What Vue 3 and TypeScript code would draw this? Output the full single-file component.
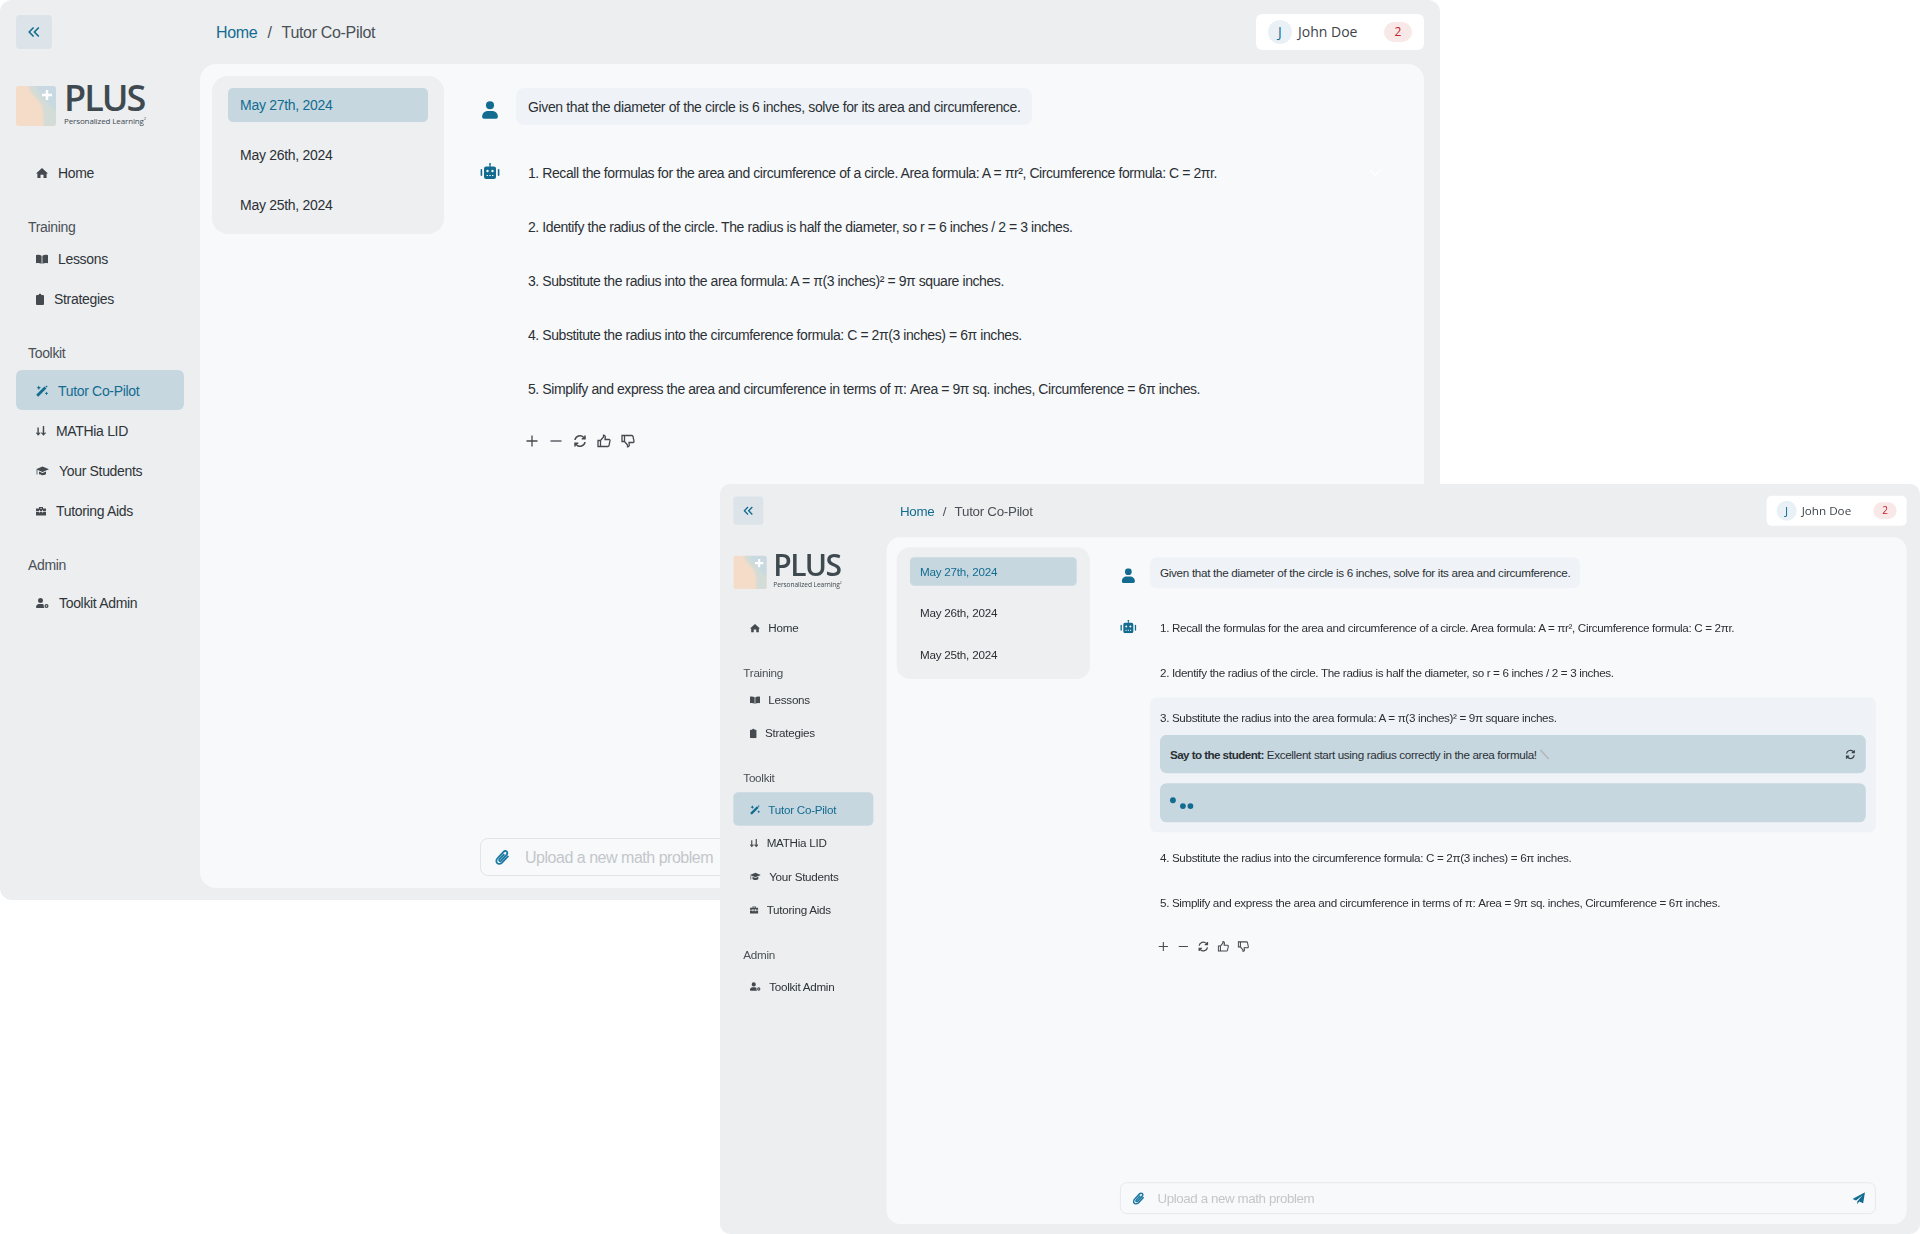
<template>
  <div class="canvas">
    <section v-for="win in windows" :key="win.id" class="window" :class="win.id">
      <header class="topbar">
        <button class="collapse" type="button" aria-label="Collapse">
          <svg width="12" height="12" viewBox="0 0 12 12" fill="none" stroke="#136c90" stroke-width="1.6">
            <path d="M5.600 1.500 1.200 6l4.400 4.500M10.800 1.500 6.400 6l4.400 4.500" />
          </svg>
        </button>
        <nav class="crumbs">
          <span class="crumb-home">Home</span>
          <span class="crumb-sep">/</span>
          <span>Tutor Co-Pilot</span>
        </nav>
        <div class="user-chip">
          <span class="avatar">J</span>
          <span class="user-name">John Doe</span>
          <span class="badge">2</span>
        </div>
      </header>

      <div class="body">
        <aside class="sidebar">
          <div class="logo">
            <svg width="40" height="40" viewBox="0 0 40 40" class="logo-mark">
              <defs>
                <clipPath :id="`clip-${win.id}`"><rect width="40" height="40" rx="3" /></clipPath>
                <filter :id="`soft-${win.id}`"><feGaussianBlur stdDeviation="1" /></filter>
              </defs>
              <g :clip-path="`url(#clip-${win.id})`">
                <rect width="40" height="40" fill="#f5dcc8" />
                <g :filter="`url(#soft-${win.id})`">
                  <path d="M12-2C14 9 22 11 26 20c2 7 1 14 2 22h14V-2Z" fill="#d3dcd6" />
                  <path d="M20-2c2 10 9 14 13 20 2 3 5 5 9 7V-2Z" fill="#c8d9e2" />
                </g>
                <path d="M31 4v10M26 9h10" stroke="#fff" stroke-width="2.500" />
              </g>
            </svg>
            <div class="logo-text">
              <div class="logo-name">PLUS</div>
              <div class="logo-sub">Personalized Learning<sup>2</sup></div>
            </div>
          </div>

          <div v-for="group in navGroups" :key="group.label" class="nav-group">
            <div v-if="group.label" class="nav-label" :class="{ tight: group.tight }">{{ group.label }}</div>
            <a
              v-for="item in group.items"
              :key="item.text"
              class="nav-item"
              :class="{ active: item.text === 'Tutor Co-Pilot' }"
            >
              <svg
                :width="icons[item.icon].w"
                :height="icons[item.icon].h"
                :viewBox="`0 0 ${icons[item.icon].w} ${icons[item.icon].h}`"
                class="icon"
              >
                <path fill="currentColor" fill-rule="evenodd" :d="icons[item.icon].d" />
              </svg>
              {{ item.text }}
            </a>
          </div>
        </aside>

        <main class="panel">
          <div class="dates">
            <div v-for="(d, i) in dates" :key="d" class="date" :class="{ active: i === 0 }">{{ d }}</div>
          </div>

          <div class="chat">
            <div class="chat-row question">
              <svg class="chat-icon" width="16" height="18" viewBox="0 0 14 16" fill="#136c90">
                <circle cx="7" cy="3.800" r="3.600" />
                <path d="M0 14c0-3.300 2.600-5.200 5-5.200h4c2.400 0 5 1.900 5 5.200 0 1-.7 1.800-1.700 1.800H1.700C.7 15.800 0 15 0 14Z" />
              </svg>
              <div class="bubble">{{ question }}</div>
            </div>

            <div class="chat-row answer">
              <svg class="chat-icon robot" width="20" height="16" viewBox="0 0 20 16" fill="#136c90">
                <path fill-rule="evenodd" d="M10 0a1 1 0 0 1 .6 1.800V3.500H14a2 2 0 0 1 2 2V14a2 2 0 0 1-2 2H6a2 2 0 0 1-2-2V5.500a2 2 0 0 1 2-2h3.400V1.800A1 1 0 0 1 10 0ZM7.500 6.800a1.200 1.200 0 1 0 0 2.400 1.200 1.200 0 0 0 0-2.400Zm5 0a1.200 1.200 0 1 0 0 2.400 1.200 1.200 0 0 0 0-2.400ZM6.600 12v1h1.400v-1Zm2.700 0v1h1.400v-1Zm2.700 0v1h1.400v-1Z" />
                <rect x="0.600" y="6" width="1.600" height="7" rx=".8" />
                <rect x="17.800" y="6" width="1.600" height="7" rx=".8" />
              </svg>
              <div class="steps">
                <div
                  v-for="(step, i) in steps"
                  :key="step"
                  class="step"
                  :class="{ open: win.openStep === i }"
                >
                  <div class="step-line">
                    <span>{{ step }}</span>
                    <svg v-if="i === 0 && win.id === 'first'" class="chevron" width="12" height="8" viewBox="0 0 12 8" fill="none" stroke="#fff" stroke-width="1.500">
                      <path d="M1 1.200 6 6.200l5-5" />
                    </svg>
                  </div>
                  <template v-if="win.openStep === i">
                    <div class="say">
                      <span><b>Say to the student:</b> Excellent start using radius correctly in the area formula!</span>
                      <svg class="ruler" width="13" height="13" viewBox="0 0 13 13" fill="none" stroke="#b5b9bc" stroke-width="2">
                        <path d="M1.500 1 11.500 12" />
                      </svg>
                      <svg class="say-refresh" width="13" height="13" viewBox="0 0 14 14" fill="none" stroke="#3d4348" stroke-width="1.600">
                        <path :d="refreshPath" />
                      </svg>
                    </div>
                    <div class="say loading">
                      <i class="dot up"></i><i class="dot"></i><i class="dot"></i>
                    </div>
                  </template>
                </div>

                <div class="actions">
                  <svg v-for="a in actionIcons" :key="a" width="14" height="14" viewBox="0 0 14 14" fill="none" stroke="#444a4f" :stroke-width="a === refreshPath ? 1.500 : 1.300">
                    <path :d="a" />
                  </svg>
                </div>
              </div>
            </div>

            <div class="composer">
              <svg width="15" height="16" viewBox="0 0 14 15" fill="none" stroke="#1f7ba4" stroke-width="1.700">
                <path d="M12.500 6.500 6.800 12.600c-1.500 1.600-3.700 1.700-4.800.6-1.200-1.200-1-3.200.5-4.700l5.400-5.800c1-1 2.300-1.100 3.100-.3.800.8.700 2.100-.3 3.100l-5 5.400c-.5.500-1.200.6-1.600.2-.4-.4-.3-1.100.2-1.600l4.400-4.700" />
              </svg>
              <span class="placeholder">Upload a new math problem</span>
              <svg class="send" width="15" height="15" viewBox="0 0 15 15" fill="#136c90">
                <path d="M15 0 12.800 13 8 11l-2.300 3.300V11L12 3.500 4.300 9.900 0 8Z" />
              </svg>
            </div>
          </div>
        </main>
      </div>
    </section>
  </div>
</template>

<script setup lang="ts">
type IconName = 'home' | 'book' | 'clip' | 'wand' | 'arrows' | 'cap' | 'toolbox' | 'admin';

interface NavItem { text: string; icon: IconName }
interface NavGroup { label: string; tight?: boolean; items: NavItem[] }

const windows = [
  { id: 'first', openStep: -1 },
  { id: 'second', openStep: 2 },
];

const icons: Record<IconName, { w: number; h: number; d: string }> = {
  home: { w: 12, h: 12, d: 'M6 1 12 6.400h-1.400V11H7.500V7.700h-3V11H1.400V6.400H0Z' },
  book: { w: 12, h: 12, d: 'M0 2.200C2 1.600 4 1.800 5.600 2.800v8C4 9.900 2 9.700 0 10.200Zm12 0c-2-.6-4-.4-5.600.6v8c1.600-.9 3.600-1.100 5.600-.6Z' },
  clip: { w: 8, h: 12, d: 'M1 2h1.600C2.700.4 5.300.4 5.400 2H7a1 1 0 0 1 1 1v8a1 1 0 0 1-1 1H1a1 1 0 0 1-1-1V3a1 1 0 0 1 1-1Z' },
  wand: { w: 12, h: 12, d: 'M.2 9.800 8.400 1.600l2 2-8.200 8.200ZM2.800.6l.7 1.500 1.500.7-1.500.7-.7 1.500-.7-1.500L.6 2.800l1.500-.7ZM10.500 6.600l.6 1.200 1.200.6-1.200.6-.6 1.200-.6-1.200-1.200-.6 1.200-.6ZM10.500.2l.4.9.9.4-.9.4-.4.9-.4-.9-.9-.4.9-.4Z' },
  arrows: { w: 10, h: 12, d: 'M1.400 2.500h1.400v5.800l1-1 .8.800L2.100 10.800 0 8.100l.8-.8.6 1Zm5.400-1.500h1.400v7.300l1-1 .8.800-2.500 2.700-2.500-2.700.8-.8.900 1Z' },
  cap: { w: 13, h: 12, d: 'M6.500 1.500 13 4.200 6.500 7 0 4.200ZM3 6.400l3.500 1.500L10 6.400V9c-1.500 1.600-5.500 1.600-7 0ZM.6 5h.8v4.500H.6Z' },
  toolbox: { w: 10, h: 12, d: 'M3 2h4v1.500h3V6H7v-.8H6V6H4v-.8H3V6H0V3.500h3Zm1 1v.5h2V3ZM0 6.800h3v.8h1v-.8h2v.8h1v-.8h3v3.700H0Z' },
  admin: { w: 13, h: 12, d: 'M4.500 1a2.500 2.500 0 1 1 0 5 2.500 2.500 0 0 1 0-5ZM3 7h3c1 0 1.500.4 1.800 1-.3 1 0 2 .7 3H.7C.3 11 0 10.700 0 10.200 0 8.400 1.400 7 3 7Zm7.500 0a2 2 0 1 1 0 4 2 2 0 0 1 0-4Zm0 1.300a.7.7 0 1 0 0 1.400.7.7 0 0 0 0-1.400Z' },
};

const navGroups: NavGroup[] = [
  { label: '', items: [{ text: 'Home', icon: 'home' }] },
  {
    label: 'Training',
    tight: true,
    items: [
      { text: 'Lessons', icon: 'book' },
      { text: 'Strategies', icon: 'clip' },
    ],
  },
  {
    label: 'Toolkit',
    items: [
      { text: 'Tutor Co-Pilot', icon: 'wand' },
      { text: 'MATHia LID', icon: 'arrows' },
      { text: 'Your Students', icon: 'cap' },
      { text: 'Tutoring Aids', icon: 'toolbox' },
    ],
  },
  { label: 'Admin', items: [{ text: 'Toolkit Admin', icon: 'admin' }] },
];

const dates = ['May 27th, 2024', 'May 26th, 2024', 'May 25th, 2024'];

const question = 'Given that the diameter of the circle is 6 inches, solve for its area and circumference.';

const steps = [
  '1. Recall the formulas for the area and circumference of a circle. Area formula: A = πr², Circumference formula: C = 2πr.',
  '2. Identify the radius of the circle. The radius is half the diameter, so r = 6 inches / 2 = 3 inches.',
  '3. Substitute the radius into the area formula: A = π(3 inches)² = 9π square inches.',
  '4. Substitute the radius into the circumference formula: C = 2π(3 inches) = 6π inches.',
  '5. Simplify and express the area and circumference in terms of π: Area = 9π sq. inches, Circumference = 6π inches.',
];

const refreshPath = 'M2 6a5 5 0 0 1 8.600-2.700L12 4.800M12 1.500v3.300H8.700M12 8a5 5 0 0 1-8.600 2.700L2 9.200M2 12.500V9.200h3.300';

const actionIcons = [
  'M7 1.500v11M1.500 7h11',
  'M1.500 7h11',
  refreshPath,
  'M1 6.500h2.500V12.500H1ZM3.500 6.500 6.500 3V1.200c1.300 0 2 .9 1.800 2.100L8 5.500h4c.7 0 1.100.6 1 1.200l-1 4.800c-.1.600-.5 1-1.100 1H3.500',
  'M1 1.500h2.500V7.500H1ZM3.500 7.500 6.500 11v1.800c1.300 0 2-.9 1.800-2.100L8 8.500h4c.7 0 1.100-.6 1-1.200L12 2.500c-.1-.6-.5-1-1.100-1H3.500',
];
</script>

<style>
html,
body {
  margin: 0;
  background: #fff;
}
</style>

<style scoped>
.canvas {
  position: relative;
  width: 1920px;
  height: 1234px;
  overflow: hidden;
  background: #fff;
  font-family: "Liberation Sans", Arial, sans-serif;
  font-size: 14px;
  line-height: 20px;
  letter-spacing: -0.023em;
  color: #2b3035;
}

.window {
  position: absolute;
  left: 0;
  top: 0;
  width: 1440px;
  height: 900px;
  display: flex;
  flex-direction: column;
  box-sizing: border-box;
  padding: 0 16px 12px 0;
  background: #eceef0;
  border-radius: 12px;
  overflow: hidden;
}

.window.second {
  left: 720px;
  top: 484px;
  transform: scale(0.83333);
  transform-origin: 0 0;
}

.topbar {
  height: 64px;
  flex: none;
  display: flex;
  align-items: center;
}

.collapse {
  width: 36px;
  height: 34px;
  margin: 0 0 0 16px;
  padding: 0;
  border: 0;
  border-radius: 4px;
  background: #dde4e9;
  display: flex;
  align-items: center;
  justify-content: center;
}

.crumbs {
  margin: 1px 0 0 164px;
  display: flex;
  gap: 10px;
  font-size: 16px;
  color: #4a5056;
}

.crumb-home {
  color: #136c90;
}

.user-chip {
  margin-left: auto;
  width: 168px;
  height: 36px;
  box-sizing: border-box;
  padding: 0 12px;
  display: flex;
  align-items: center;
  background: #fff;
  border-radius: 6px;
  font-family: "Open Sans", sans-serif;
  letter-spacing: 0;
  color: #3d4348;
}

.avatar {
  width: 24px;
  height: 24px;
  border-radius: 50%;
  background: #e9f1f6;
  color: #136c90;
  text-align: center;
  line-height: 24px;
  font-size: 14px;
}

.user-name {
  margin-left: 6px;
  font-size: 14px;
}

.badge {
  margin-left: auto;
  width: 28px;
  height: 20px;
  border-radius: 10px;
  background: #f8e8e8;
  color: #c3222e;
  text-align: center;
  font-size: 12px;
}

.body {
  flex: 1;
  min-height: 0;
  display: flex;
}

.sidebar {
  width: 200px;
  flex: none;
  padding-top: 22px;
  box-sizing: border-box;
}

.logo {
  display: flex;
  height: 40px;
  margin: 0 0 26px 16px;
  gap: 8px;
}

.logo-mark {
  flex: none;
}

.logo-text {
  font-family: "Open Sans", sans-serif;
  color: #3f4a50;
}

.logo-name {
  font-size: 36px;
  font-weight: 600;
  line-height: 24px;
  height: 24px;
  letter-spacing: -0.055em;
}

.logo-sub {
  margin-top: 6px;
  font-size: 8px;
  line-height: 10px;
  letter-spacing: -0.015em;
}

.logo-sub sup {
  font-size: 4px;
  line-height: 0;
}

.nav-group {
  margin-bottom: 24px;
}

.nav-label {
  height: 20px;
  box-sizing: border-box;
  padding-top: 1px;
  margin: 0 0 8px 28px;
  color: #4a5056;
}

.nav-label.tight {
  margin-bottom: 2px;
}

.nav-item {
  display: flex;
  align-items: center;
  gap: 10px;
  height: 40px;
  box-sizing: border-box;
  margin: 0 16px;
  padding: 1px 0 0 20px;
  border-radius: 6px;
  color: #2f3439;
}

.nav-item .icon {
  flex: none;
  color: #444a4f;
}

.nav-item.active,
.nav-item.active .icon {
  color: #136c90;
}

.nav-item.active {
  background: #c6d7e0;
}

.panel {
  flex: 1;
  min-width: 0;
  display: flex;
  box-sizing: border-box;
  padding: 12px 37px 12px 12px;
  background: #f8f9fb;
  border-radius: 16px;
}

.dates {
  width: 232px;
  height: 158px;
  flex: none;
  box-sizing: border-box;
  padding: 12px 16px;
  display: flex;
  flex-direction: column;
  gap: 16px;
  background: #edeff1;
  border-radius: 16px;
  letter-spacing: -0.02em;
}

.date {
  height: 34px;
  flex: none;
  padding-left: 12px;
  display: flex;
  align-items: center;
  border-radius: 5px;
  color: #2b3035;
}

.date.active {
  background: #c6d7e0;
  color: #136c90;
}

.chat {
  flex: 1;
  min-width: 0;
  margin-left: 36px;
  display: flex;
  flex-direction: column;
}

.chat-row {
  display: flex;
}

.question {
  margin-top: 12px;
  align-items: flex-start;
}

.chat-icon {
  flex: none;
  margin: 13px 18px 0 2px;
}

.chat-icon.robot {
  margin: 15px 16px 0 0;
}

.bubble {
  padding: 9px 12px 8px;
  border-radius: 8px;
  background: #eff3f7;
  letter-spacing: -0.026em;
}

.answer {
  margin-top: 23px;
  align-items: flex-start;
}

.steps {
  flex: 1;
  min-width: 0;
  display: flex;
  flex-direction: column;
  gap: 6px;
  letter-spacing: -0.03em;
}

.step {
  padding: 14px 12px;
  border-radius: 8px;
}

.step.open {
  padding-bottom: 12px;
  background: #eff3f7;
}

.step-line {
  display: flex;
  justify-content: space-between;
  align-items: center;
  padding-top: 1px;
  margin-bottom: -1px;
}

.chevron {
  margin-right: -6px;
}

.say {
  position: relative;
  height: 46px;
  margin: 11px 0 0;
  box-sizing: border-box;
  padding: 1px 12px 0;
  display: flex;
  align-items: center;
  gap: 3px;
  background: #c6d7e0;
  border-radius: 8px;
}

.say b {
  letter-spacing: -0.05em;
}

.say-refresh {
  margin-left: auto;
}

.say.loading {
  height: 47px;
  margin-top: 12px;
  gap: 2px;
}

.dot {
  width: 7px;
  height: 7px;
  margin-top: 6px;
  border-radius: 50%;
  background: #136c90;
}

.dot.up {
  margin: -8px 3px 0 0;
}

.actions {
  margin: 14px 0 0 9px;
  display: flex;
  gap: 10px;
  height: 18px;
  align-items: center;
}

.composer {
  margin-top: auto;
  height: 38px;
  flex: none;
  box-sizing: border-box;
  padding: 0 12px 0 14px;
  display: flex;
  align-items: center;
  border: 1px solid #e2e5e8;
  border-radius: 8px;
}

.placeholder {
  margin: 2px 0 0 15px;
  font-size: 16px;
  letter-spacing: -0.03em;
  color: #c3c7ca;
}

.send {
  margin-left: auto;
}
</style>
